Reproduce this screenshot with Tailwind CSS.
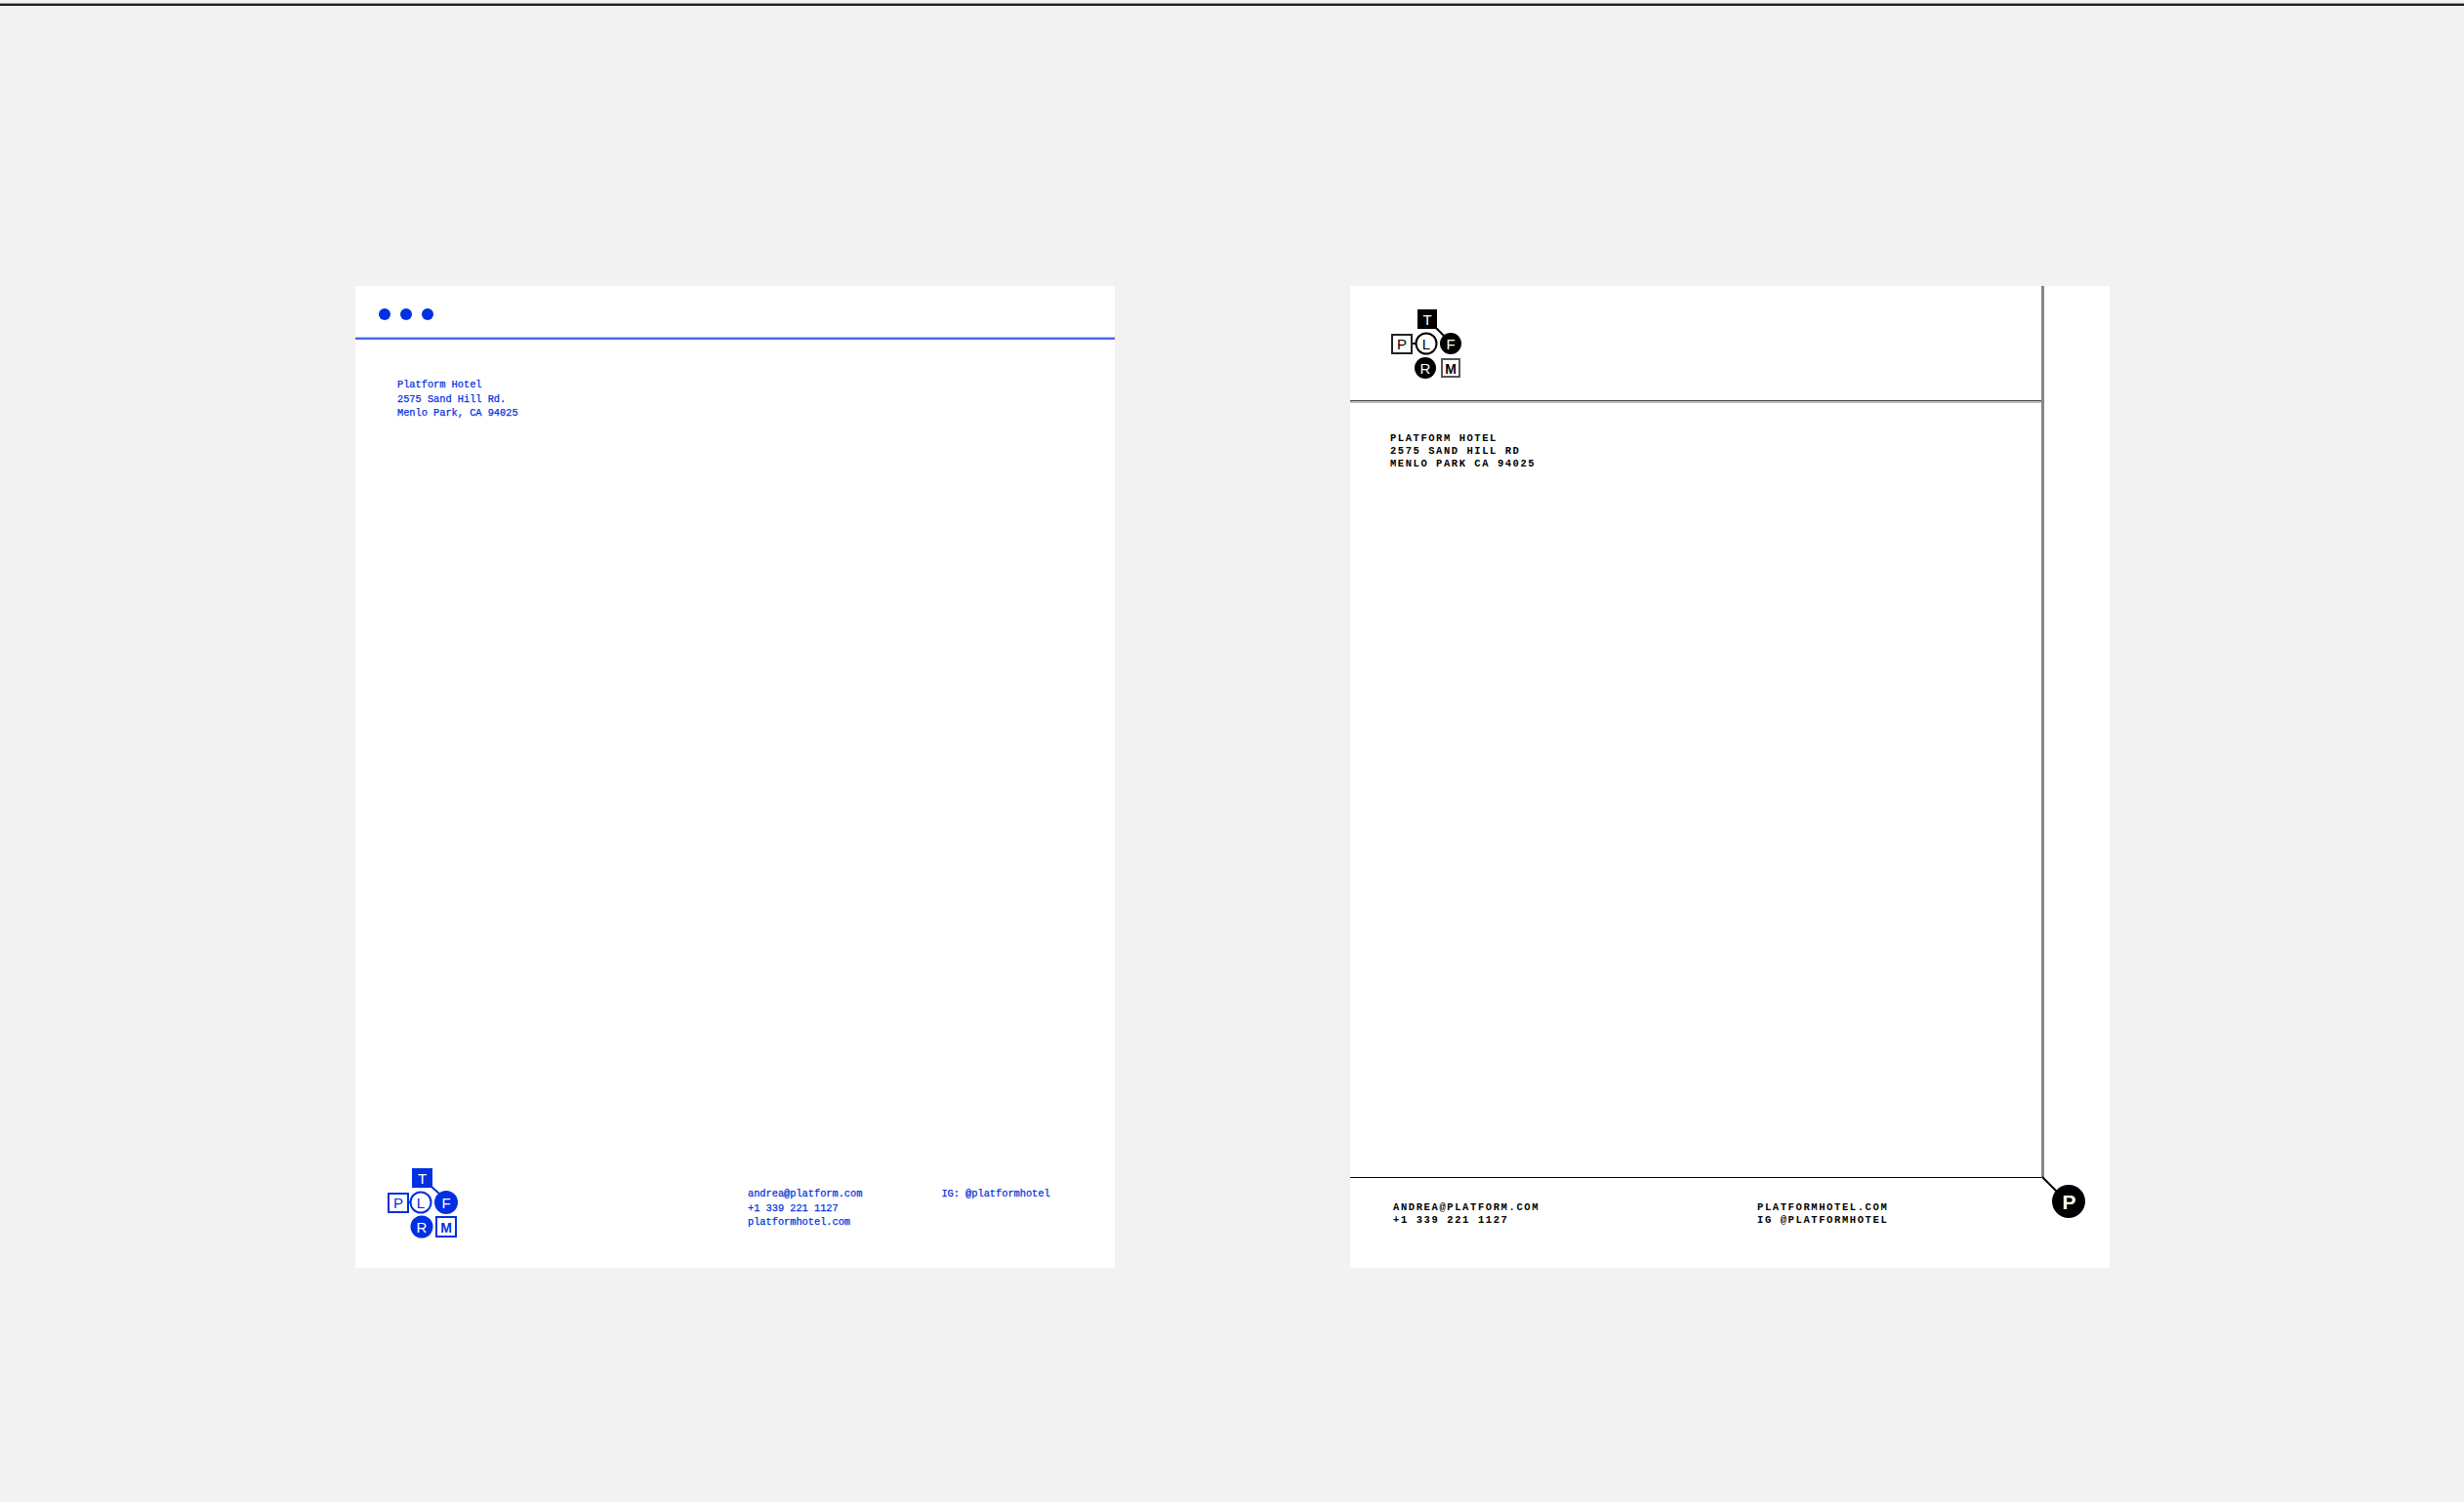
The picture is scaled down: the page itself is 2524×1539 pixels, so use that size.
<!DOCTYPE html>
<html lang="en">
<head>
    <meta charset="UTF-8">
    <title>Platform Hotel Letterhead</title>
    <script src="https://cdn.jsdelivr.net/npm/@tailwindcss/browser@4"></script>
</head>
<body class="bg-[#f2f2f2] w-[2524px] h-[1539px] overflow-hidden">
    <div class="h-[3px]"></div>
    <div class="h-[3px] bg-[#222] border-t border-[#999]"></div>

    <main class="flex gap-[241px] pl-[364px] pt-[287px]">
        <!-- blue sheet -->
        <section class="w-[778px] h-[1006px] bg-white flex flex-col text-[#0030e0] font-['Liberation_Mono',monospace] text-[10.3px] leading-[14.5px] [-webkit-text-stroke:0.25px_#0030e0]">
            <div class="h-[52px] flex items-center gap-[10px] pl-[24px] pt-[6px]">
                <span class="w-[12px] h-[12px] rounded-full bg-[#0030e0]"></span>
                <span class="w-[12px] h-[12px] rounded-full bg-[#0030e0]"></span>
                <span class="w-[12px] h-[12px] rounded-full bg-[#0030e0]"></span>
            </div>
            <div class="h-[3px] bg-[#c0c6f0] border-b-2 border-[#4a68e8]"></div>
            <div class="pl-[43px] pt-[39px]">
                <p>Platform Hotel</p>
                <p>2575 Sand Hill Rd.</p>
                <p>Menlo Park, CA 94025</p>
            </div>
            <div class="mt-auto h-[102px] pl-[33px] flex">
                <svg class="w-[72px] h-[72px] [-webkit-text-stroke:0px]" viewBox="0 0 72 72" font-family="Liberation Sans, sans-serif" font-size="15" text-anchor="middle">
                    <path d="M22 35H24M44 18L54 27" stroke="#0030e0" stroke-width="2" fill="none"/>
                    <rect x="25" y="0" width="21" height="20" fill="#0030e0"/>
                    <text x="35.5" y="15.5" fill="#fff">T</text>
                    <rect x="1" y="26" width="20" height="19" fill="#fff" stroke="#0030e0" stroke-width="2"/>
                    <text x="11" y="41" fill="#0030e0">P</text>
                    <circle cx="34" cy="35" r="10.5" fill="#fff" stroke="#0030e0" stroke-width="2"/>
                    <text x="34" y="41" fill="#0030e0">L</text>
                    <circle cx="60" cy="35" r="12" fill="#0030e0"/>
                    <text x="60" y="41" fill="#fff">F</text>
                    <circle cx="35" cy="60" r="11.5" fill="#0030e0"/>
                    <text x="35" y="66" fill="#fff">R</text>
                    <rect x="50" y="50" width="20" height="20" fill="#fff" stroke="#0030e0" stroke-width="2"/>
                    <text x="60" y="65.5" fill="#0030e0" font-weight="700" font-size="14">M</text>
                </svg>
                <div class="ml-[297px] pt-[19px]">
                    <p>andrea@platform.com</p>
                    <p>+1 339 221 1127</p>
                    <p>platformhotel.com</p>
                </div>
                <div class="ml-[81px] pt-[19px]">
                    <p>IG: @platformhotel</p>
                </div>
            </div>
        </section>

        <!-- black sheet -->
        <section class="relative w-[778px] h-[1006px] bg-white flex text-black font-['Liberation_Mono',monospace] font-bold text-[10.5px] leading-[13px]">
            <div class="w-[711px] h-[914px] border-r-[3px] border-[#888] flex flex-col">
                <div class="h-[117px] pl-[42px] pt-[24px]">
                    <svg class="w-[72px] h-[72px] font-normal" viewBox="0 0 72 72" font-family="Liberation Sans, sans-serif" font-size="15" text-anchor="middle">
                        <path d="M22 35H26M45 18L54 27" stroke="#000" stroke-width="2" fill="none"/>
                        <rect x="27" y="0" width="20" height="20" fill="#000"/>
                        <text x="37" y="15.5" fill="#fff">T</text>
                        <rect x="1" y="26" width="20" height="19" fill="#fff" stroke="#222" stroke-width="2"/>
                        <text x="11" y="41" fill="#000">P</text>
                        <circle cx="36" cy="35" r="10.5" fill="#fff" stroke="#000" stroke-width="2"/>
                        <text x="36" y="41" fill="#000">L</text>
                        <circle cx="61" cy="35" r="11" fill="#000"/>
                        <text x="61" y="41" fill="#fff">F</text>
                        <circle cx="35" cy="60" r="11" fill="#000"/>
                        <text x="35" y="66" fill="#fff">R</text>
                        <rect x="52" y="51" width="18" height="18" fill="#fff" stroke="#555" stroke-width="2"/>
                        <text x="61" y="65.5" fill="#000" font-weight="700" font-size="14">M</text>
                    </svg>
                </div>
                <div class="h-[3px] bg-[#bbb] border-t border-[#444]"></div>
                <div class="pl-[41px] pt-[30px] tracking-[1.55px]">
                    <p>PLATFORM HOTEL</p>
                    <p>2575 SAND HILL RD</p>
                    <p>MENLO PARK CA 94025</p>
                </div>
                <div class="mt-auto h-[1px] bg-black"></div>
            </div>
            <div class="absolute left-0 top-[914px] w-[710px] pl-[44px] pt-[24px] flex tracking-[1.6px] leading-[13px]">
                <div class="w-[373px]">
                    <p>ANDREA@PLATFORM.COM</p>
                    <p>+1 339 221 1127</p>
                </div>
                <div>
                    <p>PLATFORMHOTEL.COM</p>
                    <p>IG @PLATFORMHOTEL</p>
                </div>
            </div>
            <svg class="absolute left-[707px] top-[911px] w-[50px] h-[50px]" viewBox="0 0 50 50" font-family="Liberation Sans, sans-serif" font-weight="700" font-size="21" text-anchor="middle">
                <path d="M2 2L18 18" stroke="#000" stroke-width="2"/>
                <circle cx="29" cy="27" r="17" fill="#000"/>
                <text x="29.5" y="34.5" fill="#fff">P</text>
            </svg>
        </section>
    </main>
</body>
</html>
